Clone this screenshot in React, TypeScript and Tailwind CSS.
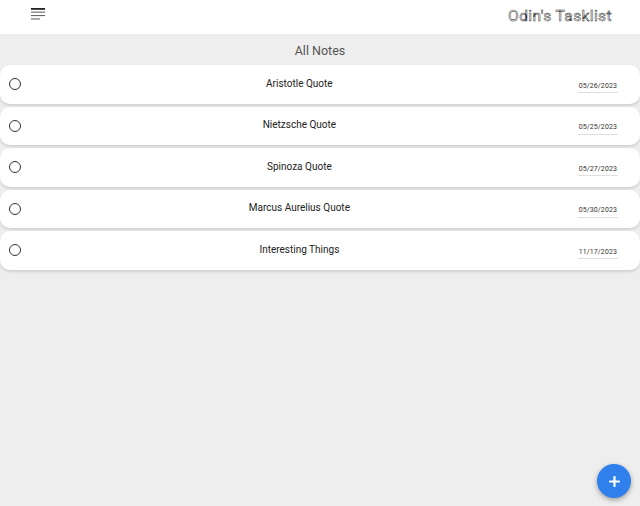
const notes = [
  { title: "Aristotle Quote", date: "05/26/2023" },
  { title: "Nietzsche Quote", date: "05/25/2023" },
  { title: "Spinoza Quote", date: "05/27/2023" },
  { title: "Marcus Aurelius Quote", date: "05/30/2023" },
  { title: "Interesting Things", date: "11/17/2023" },
];

export default function App() {
  return (
    <div className="h-[506px] w-[640px] bg-[#eeeeee] relative overflow-hidden font-['Roboto',sans-serif]">
      <header className="h-[34px] bg-white flex items-center justify-between pl-[31px] pr-[28px]">
        <svg width="15" height="12" viewBox="0 0 15 12" className="self-start mt-[8px]">
          <rect x="0" y="0" width="14" height="1.8" fill="#222" />
          <rect x="0" y="3.6" width="14" height="1.1" fill="#666" />
          <rect x="0" y="7" width="14" height="1.1" fill="#666" />
          <rect x="0" y="10.4" width="9" height="1.1" fill="#666" />
        </svg>
        <h1 className="text-[15.5px] font-normal text-white [-webkit-text-stroke:0.5px_#222] tracking-[0.4px] font-['Roboto',sans-serif]">
          Odin's Tasklist
        </h1>
      </header>

      <div className="h-[31px] pt-[4px] flex items-center justify-center text-[12.5px] text-[#555]">All Notes</div>

      <ul className="flex flex-col gap-[3px]">
        {notes.map((n) => (
          <li
            key={n.title}
            className="h-[38.5px] bg-white rounded-[10px] shadow-[0_2px_3px_rgba(0,0,0,0.12)] flex items-center pl-[9px] pr-[22px]"
          >
            <span className="w-[12px] h-[12px] rounded-full border-[1.5px] border-[#333] shrink-0" />
            <span className="flex-1 text-center text-[10px] text-[#222] pb-[2px]">{n.title}</span>
            <span className="text-[7px] text-[#333] border-b border-[#e0e0e0] pb-[1px] pt-[5px] px-[1px] tracking-[0.1px]">
              {n.date}
            </span>
          </li>
        ))}
      </ul>

      <button className="absolute left-[597px] top-[464px] w-[34px] h-[34px] rounded-full bg-[#2f80ed] shadow-[0_2px_5px_rgba(0,0,0,0.35)] flex items-center justify-center">
        <svg width="11" height="11" viewBox="0 0 11 11">
          <path d="M5.5 1v9M1 5.5h9" stroke="white" strokeWidth="2.2" strokeLinecap="round" />
        </svg>
      </button>
    </div>
  );
}
